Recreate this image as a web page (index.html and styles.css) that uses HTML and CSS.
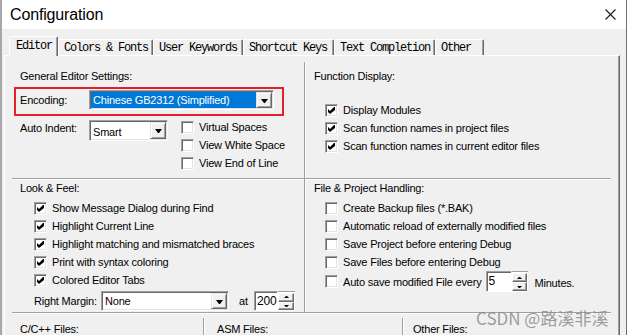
FILE: index.html
```html
<!DOCTYPE html>
<html>
<head>
<meta charset="utf-8">
<link rel="stylesheet" href="styles.css">
</head>
<body>
<div class="window">
  <div class="titlebar">
    <span class="title">Configuration</span>
    <svg class="close" width="11" height="11" viewBox="0 0 11 11"><path d="M0.5 0.5L10.5 10.5M10.5 0.5L0.5 10.5" stroke="#1a1a1a" stroke-width="1.1" fill="none"/></svg>
  </div>
  <div class="client">
    <div class="tabs">
      <div class="tab tab-sel t-editor">Editor</div>
      <div class="tab t-colors">Colors &amp; Fonts</div>
      <div class="tab t-user">User Keywords</div>
      <div class="tab t-short">Shortcut Keys</div>
      <div class="tab t-text">Text Completion</div>
      <div class="tab t-other">Other</div>
    </div>
    <div class="panel">
      <div class="grid">
        <section class="cell c-general">
          <div class="gtitle">General Editor Settings:</div>
          <div class="hilite">
            <span class="lbl">Encoding:</span>
            <div class="select sel-enc">
              <span class="sel-val sel-active">Chinese GB2312 (Simplified)</span>
              <span class="sel-btn"><i class="tri"></i></span>
            </div>
          </div>
          <div class="indent-row">
            <span class="lbl lbl-indent">Auto Indent:</span>
            <div class="select sel-indent">
              <span class="sel-val sel-low">Smart</span>
              <span class="sel-btn"><i class="tri"></i></span>
            </div>
            <div class="checks checks-view">
              <label class="chk"><span class="box"></span>Virtual Spaces</label>
              <label class="chk"><span class="box"></span>View White Space</label>
              <label class="chk"><span class="box"></span>View End of Line</label>
            </div>
          </div>
        </section>

        <section class="cell c-func">
          <div class="gtitle">Function Display:</div>
          <div class="checks checks-func">
            <label class="chk"><span class="box"><svg class="tick" width="7" height="7" viewBox="0 0 7 7"><polygon points="0,2 2,4 6,0 7,0 7,3 2,7 0,5"/></svg></span>Display Modules</label>
            <label class="chk"><span class="box"><svg class="tick" width="7" height="7" viewBox="0 0 7 7"><polygon points="0,2 2,4 6,0 7,0 7,3 2,7 0,5"/></svg></span>Scan function names in project files</label>
            <label class="chk"><span class="box"><svg class="tick" width="7" height="7" viewBox="0 0 7 7"><polygon points="0,2 2,4 6,0 7,0 7,3 2,7 0,5"/></svg></span>Scan function names in current editor files</label>
          </div>
        </section>

        <section class="cell c-look">
          <div class="gtitle">Look &amp; Feel:</div>
          <div class="checks checks-look">
            <label class="chk"><span class="box"><svg class="tick" width="7" height="7" viewBox="0 0 7 7"><polygon points="0,2 2,4 6,0 7,0 7,3 2,7 0,5"/></svg></span>Show Message Dialog during Find</label>
            <label class="chk"><span class="box"><svg class="tick" width="7" height="7" viewBox="0 0 7 7"><polygon points="0,2 2,4 6,0 7,0 7,3 2,7 0,5"/></svg></span>Highlight Current Line</label>
            <label class="chk"><span class="box"><svg class="tick" width="7" height="7" viewBox="0 0 7 7"><polygon points="0,2 2,4 6,0 7,0 7,3 2,7 0,5"/></svg></span>Highlight matching and mismatched braces</label>
            <label class="chk"><span class="box"><svg class="tick" width="7" height="7" viewBox="0 0 7 7"><polygon points="0,2 2,4 6,0 7,0 7,3 2,7 0,5"/></svg></span>Print with syntax coloring</label>
            <label class="chk"><span class="box"><svg class="tick" width="7" height="7" viewBox="0 0 7 7"><polygon points="0,2 2,4 6,0 7,0 7,3 2,7 0,5"/></svg></span>Colored Editor Tabs</label>
          </div>
          <div class="margin-row">
            <span class="lbl lbl-margin">Right Margin:</span>
            <div class="select sel-margin">
              <span class="sel-val">None</span>
              <span class="sel-btn"><i class="tri"></i></span>
            </div>
            <span class="at">at</span>
            <div class="spin">
              <span class="spin-in">200</span>
              <span class="spin-btns"><span class="spin-btn"><i class="tri-up"></i></span><span class="spin-btn"><i class="tri-dn"></i></span></span>
            </div>
          </div>
        </section>

        <section class="cell c-file">
          <div class="gtitle">File &amp; Project Handling:</div>
          <div class="checks checks-file">
            <label class="chk"><span class="box"></span>Create Backup files (*.BAK)</label>
            <label class="chk"><span class="box"></span>Automatic reload of externally modified files</label>
            <label class="chk"><span class="box"></span>Save Project before entering Debug</label>
            <label class="chk"><span class="box"></span>Save Files before entering Debug</label>
            <label class="chk chk-spin"><span class="box"></span>Auto save modified File every
              <span class="spin spin-min">
                <span class="spin-in">5</span>
                <span class="spin-btns"><span class="spin-btn"><i class="tri-up"></i></span><span class="spin-btn"><i class="tri-dn"></i></span></span>
              </span>
              <span class="minutes">Minutes.</span>
            </label>
          </div>
        </section>

        <div class="row3">
          <section class="cell3 c-cpp"><div class="gtitle">C/C++ Files:</div></section>
          <section class="cell3 c-asm"><div class="gtitle">ASM Files:</div></section>
          <section class="cell3 c-oth"><div class="gtitle">Other Files:</div></section>
        </div>
      </div>
    </div>
  </div>
  <div class="watermark">CSDN @路溪非溪</div>
</div>
</body>
</html>
```
FILE: styles.css
```css
html, body {
  margin: 0;
  padding: 0;
}
body {
  width: 627px;
  height: 335px;
  overflow: hidden;
  background: #f0f0f0;
  font-family: "Liberation Sans", Arial, sans-serif;
  font-size: 11px;
  letter-spacing: -0.2px;
  color: #000;
}
.window {
  position: relative;
  box-sizing: border-box;
  width: 627px;
  height: 335px;
  overflow: hidden;
  border-left: 2px solid #a8a8a8;
  border-right: 1px solid #6f6f6f;
  background: #f0f0f0;
}
.titlebar {
  height: 29px;
  background: #fff;
  display: flex;
  align-items: center;
  justify-content: space-between;
  padding: 0 10px 0 8px;
}
.title {
  font-size: 16px;
  letter-spacing: -0.15px;
  line-height: 16px;
  color: #000;
  padding-top: 1px;
}
.close {
  display: block;
  margin-top: -1px;
}

/* tabs */
.client {
  background: #f0f0f0;
}
.tabs {
  display: flex;
  align-items: flex-end;
  height: 20px;
  margin: 7px 0 -1px 7px;
  position: relative;
  z-index: 1;
}
.tab {
  box-sizing: border-box;
  flex: none;
  height: 16px;
  margin-bottom: 1px;
  padding: 1px 0 0 5px;
  line-height: 14px;
  font-family: "Liberation Mono", "Courier New", monospace;
  font-size: 12px;
  letter-spacing: -1.2px;
  white-space: nowrap;
  border-top: 1px solid #fff;
  border-left: 1px solid #fff;
  border-right: 1px solid #696969;
  box-shadow: inset -1px 0 0 #a0a0a0;
  border-radius: 2px 2px 0 0;
  background: #f0f0f0;
}
.tab-sel {
  height: 20px;
  margin-bottom: 0;
  padding: 3px 0 0 6px;
  line-height: 13px;
}
.t-editor { width: 49px; }
.t-colors { width: 95px; }
.t-user { width: 90px; }
.t-short { width: 91px; }
.t-text { width: 101px; }
.t-other { width: 49px; }

/* panel */
.panel {
  box-sizing: border-box;
  width: 616px;
  height: 290px;
  margin-left: 2px;
  border-top: 1px solid #fff;
  border-left: 1px solid #fff;
  border-right: 1px solid #696969;
  box-shadow: inset -1px 0 0 #a0a0a0;
  padding: 6px 0 0 7px;
}
.grid {
  display: grid;
  grid-template-columns: 293px 306px;
  grid-template-rows: 117px 134px auto;
}
.cell {
  box-sizing: border-box;
  border-bottom: 1px solid #a0a0a0;
  box-shadow: 0 1px 0 #fff;
}
.c-general, .c-look {
  border-right: 1px solid #a0a0a0;
  box-shadow: 1px 1px 0 #fff;
}
.gtitle {
  line-height: 14px;
  white-space: nowrap;
}
.lbl {
  width: 69px;
  flex: none;
  line-height: 14px;
}

/* general */
.c-general {
  padding: 7px 0 0 8px;
}
.hilite {
  display: flex;
  align-items: center;
  width: 270px;
  box-sizing: border-box;
  margin: 4px 0 0 -6px;
  padding: 1px 0 4px 4px;
  border: 2px solid #e3202b;
}
.select {
  display: flex;
  box-sizing: border-box;
  background: #fff;
  border: 1px solid;
  border-color: #a0a0a0 #fff #fff #a0a0a0;
  box-shadow: inset 1px 1px 0 #696969, inset -1px -1px 0 #e3e3e3;
  padding: 1px;
}
.sel-enc { width: 185px; height: 20px; }
.sel-indent { width: 79px; height: 21px; }
.sel-margin { width: 128px; height: 20px; }
.sel-val {
  flex: 1;
  display: flex;
  align-items: center;
  padding-left: 2px;
  white-space: nowrap;
  overflow: hidden;
}
.sel-low { padding-top: 2px; }
.sel-active {
  background: #0078d7;
  color: #fff;
}
.sel-btn {
  flex: none;
  width: 16px;
  box-sizing: border-box;
  background: #f0f0f0;
  border: 1px solid;
  border-color: #e3e3e3 #696969 #696969 #e3e3e3;
  box-shadow: inset 1px 1px 0 #fff, inset -1px -1px 0 #a0a0a0;
  display: flex;
  align-items: center;
  justify-content: center;
}
.tri {
  display: block;
  width: 1px;
  height: 0;
  border-left: 3px solid transparent;
  border-right: 3px solid transparent;
  border-top: 4px solid #000;
  margin-top: 1px;
}
.indent-row {
  display: flex;
  align-items: flex-start;
  margin-top: 4px;
}
.lbl-indent { padding-top: 1px; }
.checks-view {
  margin: -2px 0 0 13px;
}

/* checkboxes */
.checks {
  display: flex;
  flex-direction: column;
}
.chk {
  display: flex;
  align-items: center;
  gap: 5px;
  height: 18px;
  white-space: nowrap;
}
.box {
  flex: none;
  width: 13px;
  height: 13px;
  box-sizing: border-box;
  background: #fff;
  border: 1px solid;
  border-color: #a0a0a0 #fff #fff #a0a0a0;
  box-shadow: inset 1px 1px 0 #696969, inset -1px -1px 0 #e3e3e3;
  display: flex;
  align-items: center;
  justify-content: center;
}
.tick {
  display: block;
  fill: #000;
}

/* function display */
.c-func {
  padding: 7px 0 0 9px;
}
.checks-func {
  margin-top: 18px;
  padding-left: 11px;
}

/* look & feel */
.c-look {
  padding: 2px 0 0 8px;
}
.checks-look {
  margin: 4px 0 0 14px;
}
.margin-row {
  display: flex;
  align-items: center;
  margin: 2px 0 0 14px;
  height: 20px;
}
.lbl-margin { width: 67px; }
.at {
  box-sizing: border-box;
  width: 25px;
  padding-left: 10px;
}
.spin {
  display: flex;
  height: 20px;
}
.spin-in {
  box-sizing: border-box;
  width: 24px;
  height: 100%;
  background: #fff;
  border: 1px solid;
  border-color: #a0a0a0 #fff #fff #a0a0a0;
  box-shadow: inset 1px 1px 0 #696969;
  padding: 1px 0 0 2px;
  line-height: 16px;
  font-size: 12px;
}
.spin-btns {
  display: flex;
  flex-direction: column;
  width: 17px;
  height: 100%;
  box-sizing: border-box;
  background: #fff;
  border-top: 1px solid #a0a0a0;
  border-bottom: 1px solid #fff;
  padding: 1px 1px 0 0;
}
.spin-btn {
  flex: 1;
  box-sizing: border-box;
  background: #f0f0f0;
  border: 1px solid;
  border-color: #fff #696969 #696969 #fff;
  box-shadow: inset -1px -1px 0 #a0a0a0;
  display: flex;
  align-items: center;
  justify-content: center;
}
.tri-up, .tri-dn {
  display: block;
  width: 1px;
  height: 0;
  border-left: 2px solid transparent;
  border-right: 2px solid transparent;
}
.tri-up { border-bottom: 2px solid #000; }
.tri-dn { border-top: 2px solid #000; }

/* file handling */
.c-file {
  padding: 2px 0 0 9px;
}
.checks-file {
  margin-top: 4px;
  padding-left: 11px;
}
.chk-spin {
  height: 21px;
  gap: 0;
}
.chk-spin .box { margin-right: 5px; }
.spin-min {
  height: 21px;
  margin-left: 4px;
}
.spin-min .spin-in { width: 26px; }
.spin-min .spin-btns { width: 16px; }
.minutes { margin-left: 7px; padding-top: 2px; }

/* row 3 */
.row3 {
  grid-column: 1 / -1;
  display: grid;
  grid-template-columns: 192px 199px 1fr;
}
.cell3 {
  margin-top: 5px;
  padding-top: 4px;
  height: 40px;
  box-sizing: border-box;
}
.c-cpp {
  padding-left: 8px;
  border-right: 1px solid #a0a0a0;
  box-shadow: 1px 0 0 #fff;
}
.c-asm {
  padding-left: 13px;
  border-right: 1px solid #a0a0a0;
  box-shadow: 1px 0 0 #fff;
}
.c-oth {
  padding-left: 10px;
}

/* watermark overlay */
.watermark {
  position: absolute;
  left: 474px;
  top: 305px;
  font-family: "Noto Sans CJK SC", "Noto Sans", sans-serif;
  font-size: 17px;
  letter-spacing: 0;
  color: rgba(140, 140, 140, 0.85);
  white-space: nowrap;
}
```
